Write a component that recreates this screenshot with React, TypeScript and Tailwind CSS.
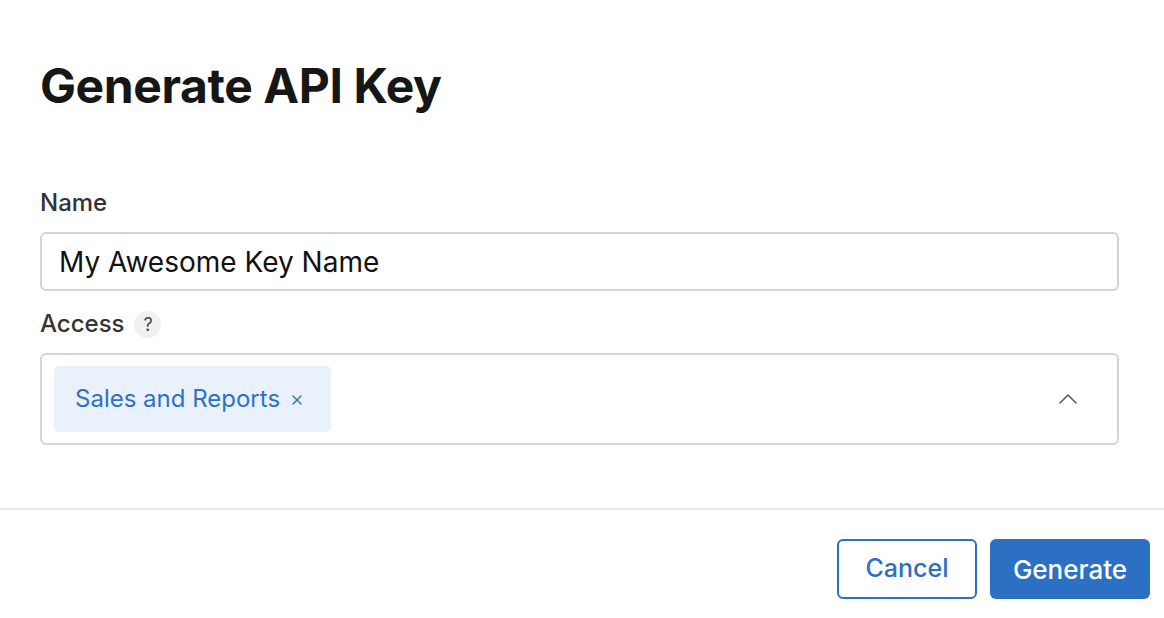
import { ChevronUp, X } from "lucide-react";

export default function App() {
  return (
    <div className="w-[1164px] h-[618px] bg-white text-[#333333] overflow-hidden" style={{ fontFamily: "Inter, 'Noto Sans', sans-serif" }}>
      <div className="pl-10 pr-[45px] pt-[56px]">
        <h1 className="text-[48px] leading-[60px] font-bold text-[#161616] tracking-[-0.4px]">Generate API Key</h1>

        <div className="mt-[72px]">
          <label className="block text-[24px] leading-[30px] font-medium text-[#333333]">Name</label>
          <div className="mt-[14px] h-[59px] rounded-[6px] border-2 border-[#d4d4d4] flex items-center px-[17px]">
            <span className="text-[28px] text-[#111111]">My Awesome Key Name</span>
          </div>
        </div>

        <div className="mt-[18px] flex items-center gap-[10px] h-[30px]">
          <span className="text-[24px] font-medium text-[#333333]">Access</span>
          <span className="w-[27px] h-[27px] rounded-full bg-[#f0f0f0] flex items-center justify-center text-[18px] text-[#444444]">?</span>
        </div>

        <div className="mt-[14px] h-[92px] rounded-[6px] border-2 border-[#d4d4d4] flex items-center pl-[12px] pr-[33px]">
          <div className="h-[66px] rounded-[5px] bg-[#e8f1fc] flex items-center pl-[21px] pr-[26px] gap-[9px]">
            <span className="text-[24px] text-[#2f72c2]">Sales and Reports</span>
            <X size={16} strokeWidth={2} className="text-[#2f72c2] mt-[2px]" />
          </div>
          <div className="flex-1" />
          <ChevronUp size={32} strokeWidth={1.1} className="text-[#555555]" />
        </div>
      </div>

      <div className="mt-[63px] h-[2px] bg-[#e8e8e8]" />

      <div className="flex justify-end gap-[13px] pr-[14px] pt-[29px]">
        <button className="w-[140px] h-[60px] rounded-[6px] border-2 border-[#2b70c3] text-[#2b70c3] text-[25px] font-medium bg-white">Cancel</button>
        <button className="w-[160px] h-[60px] rounded-[6px] bg-[#2b70c3] text-white text-[26px] font-medium">Generate</button>
      </div>
    </div>
  );
}
